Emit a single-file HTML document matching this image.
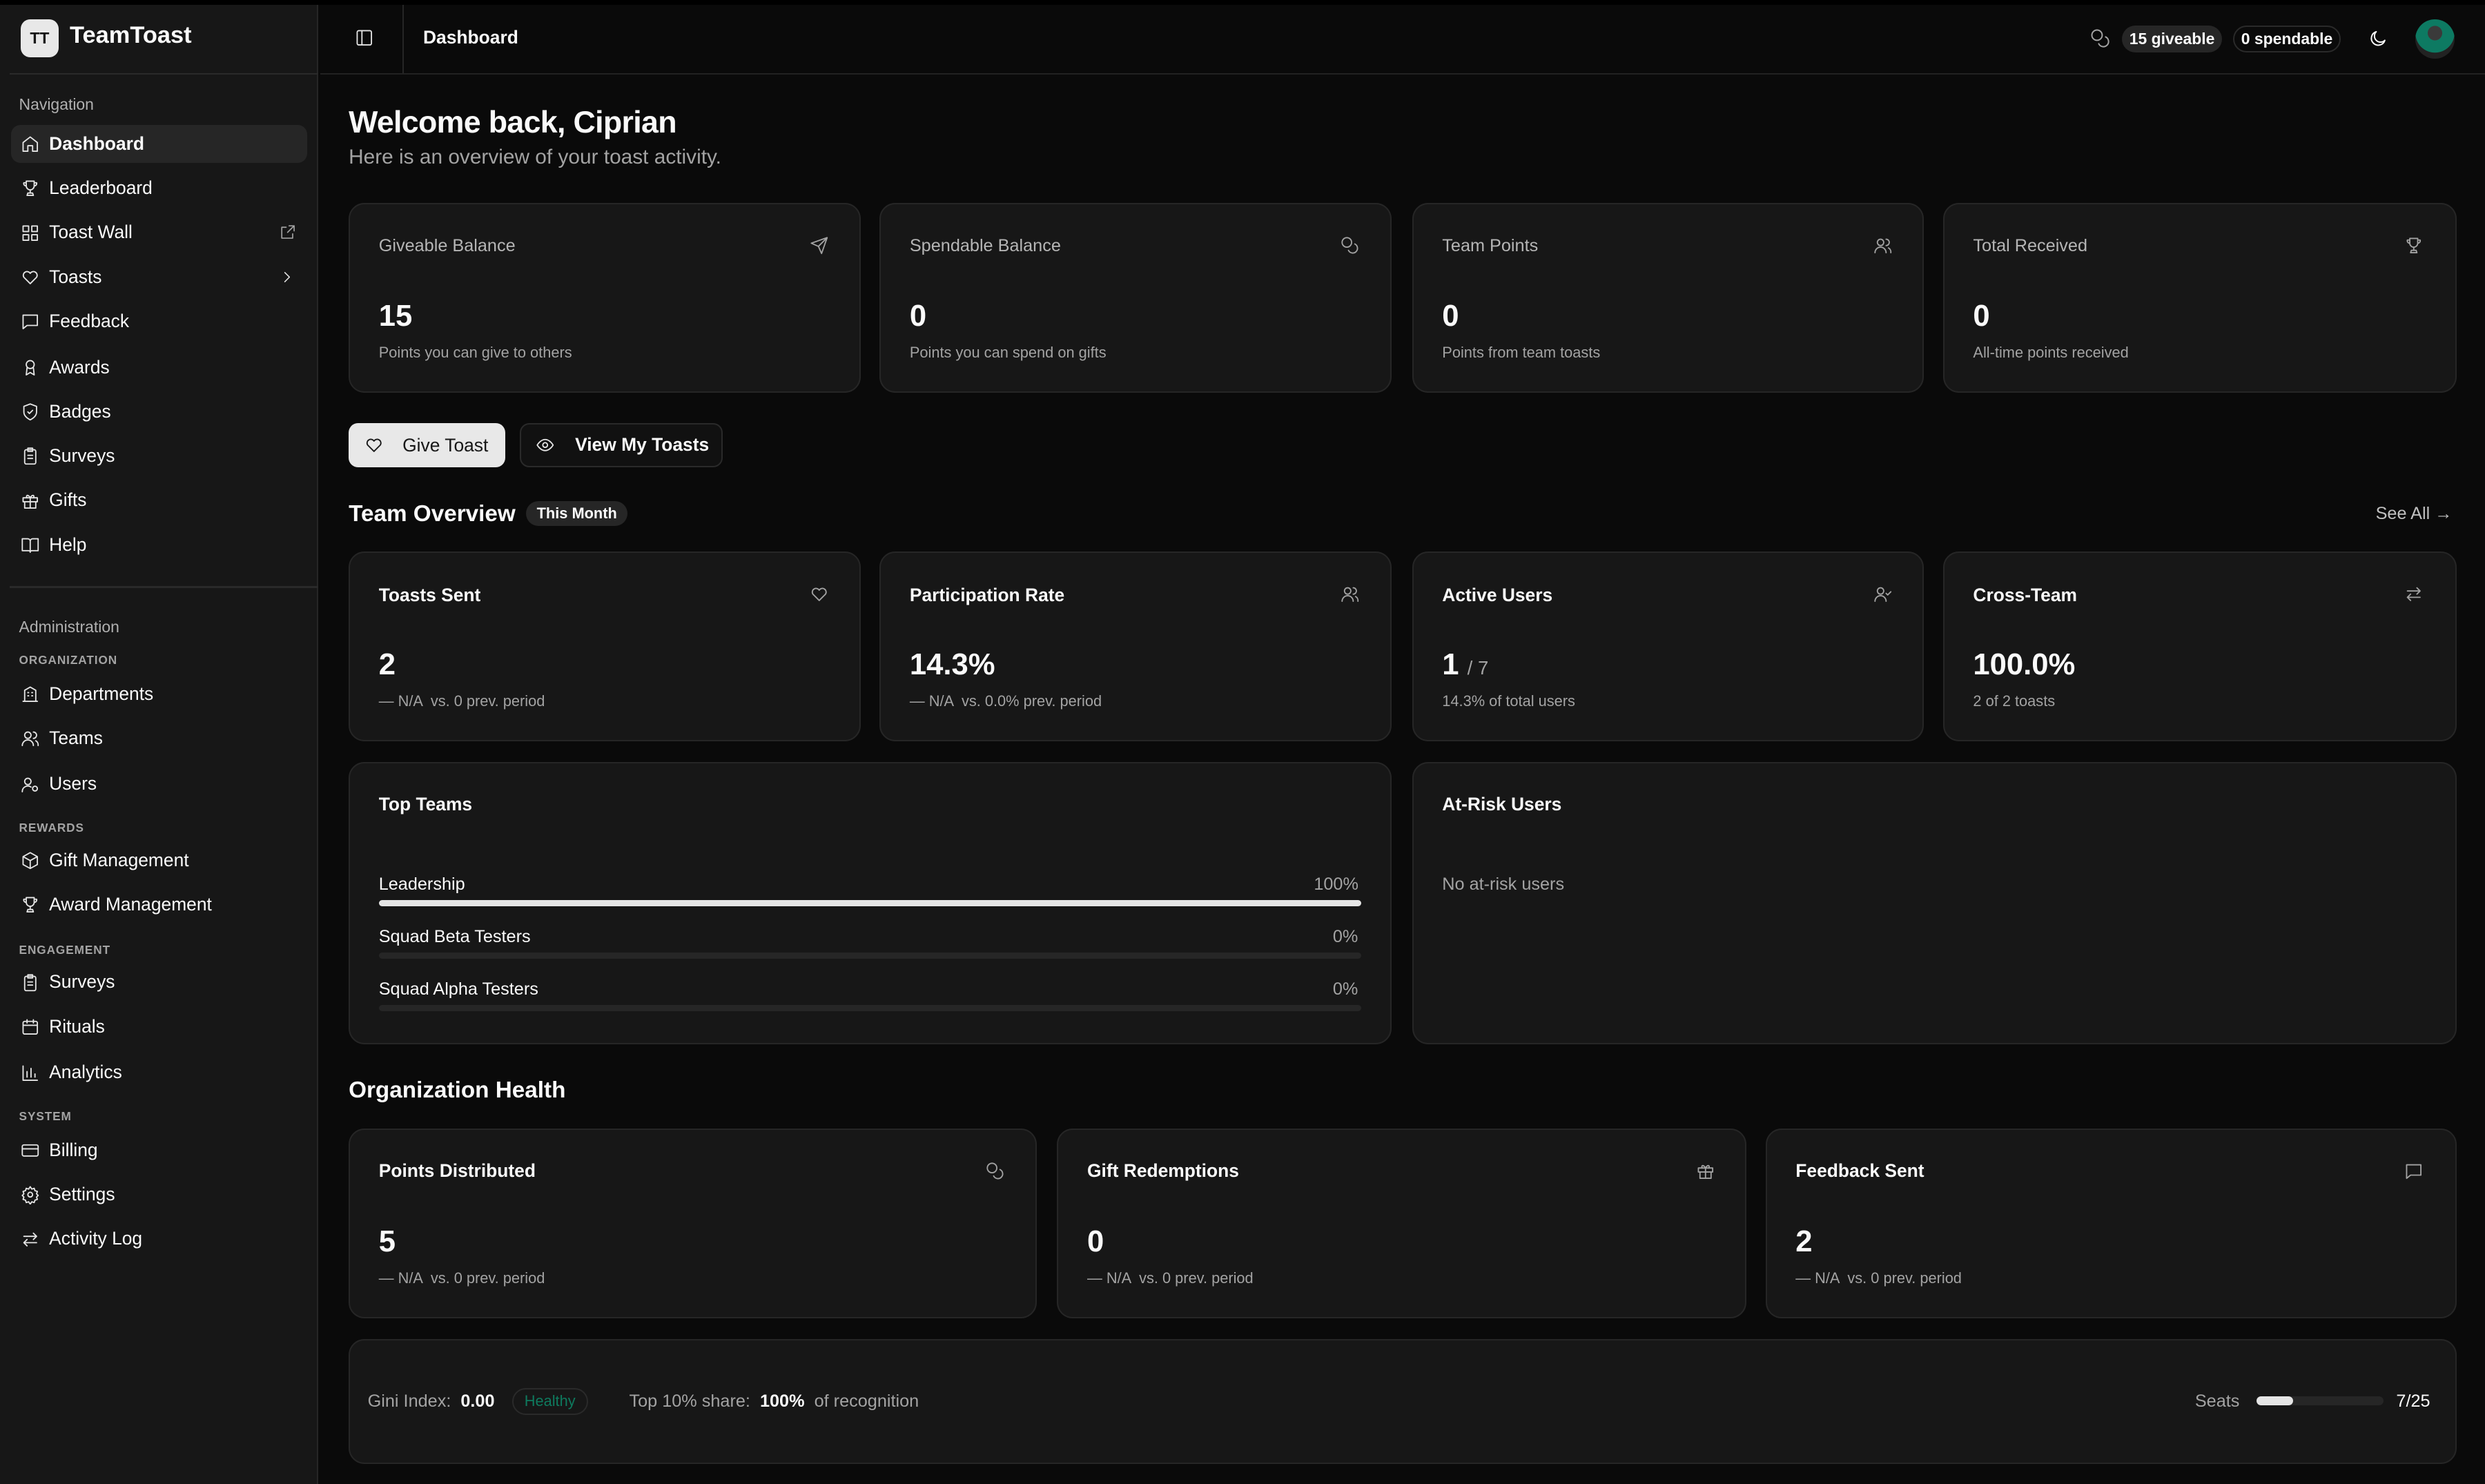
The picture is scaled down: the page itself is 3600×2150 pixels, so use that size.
<!DOCTYPE html>
<html><head><meta charset="utf-8"><style>
*{margin:0;padding:0;box-sizing:border-box}
html,body{width:3600px;height:2150px;background:#0a0a0a;overflow:hidden}
#z{zoom:2.29592;width:1568px;height:937px;position:relative;font-family:"Liberation Sans",sans-serif;color:#fafafa;background:#0a0a0a}
.a{position:absolute;white-space:nowrap}
.c{position:absolute;background:#171717;border:1px solid #262626;border-radius:10px}
svg{position:absolute;fill:none;stroke:currentColor;stroke-width:1.6;stroke-linecap:round;stroke-linejoin:round}
.nav{font-size:11.5px;color:#fafafa}
.sec{font-size:7.5px;font-weight:bold;color:#a3a3a3;letter-spacing:.4px}
.lbl{font-size:11px;color:#b5b5b5}
.big{font-size:19px;font-weight:bold}
.sub{font-size:9.5px;color:#a3a3a3}
.ttl{font-size:11.5px;font-weight:bold}
</style></head><body><div id="z">
<div class="a" style="left:0;top:0;width:1568px;height:3px;background:#000"></div>
<!-- sidebar -->
<div class="a" style="left:0;top:3px;width:201px;height:934px;background:#171717;border-right:1px solid #262626"></div>
<div class="a" style="left:13px;top:12px;width:24px;height:24px;background:#e8e8e8;border-radius:6px;color:#171717;font-size:10px;font-weight:bold;text-align:center;line-height:24px">TT</div>
<div class="a" style="left:44px;top:14px;font-size:15px;font-weight:bold">TeamToast</div>
<div class="a" style="left:6px;top:46px;width:195px;height:1px;background:#2a2a2a"></div>
<div class="a" style="left:12px;top:60px;font-size:10px;color:#b0b0b0">Navigation</div>
<div class="a" style="left:7px;top:79px;width:187px;height:24px;background:#262626;border-radius:6px"></div>
<div style="color:#e5e5e5">
<svg style="left:13px;top:85px" width="12" height="12" viewBox="0 0 24 24"><path d="M3 10l9-7 9 7v11H15v-7H9v7H3z"/></svg>
<svg style="left:13px;top:113px" width="12" height="12" viewBox="0 0 24 24"><path d="M7 3h10v6a5 5 0 01-10 0zM7 5H4a3 3 0 003 4M17 5h3a3 3 0 01-3 4M12 14v4M8 21h8l-1-3H9z"/></svg>
<svg style="left:13px;top:141px" width="12" height="12" viewBox="0 0 24 24"><rect x="3" y="3" width="7" height="7"/><rect x="14" y="3" width="7" height="7"/><rect x="3" y="14" width="7" height="7"/><rect x="14" y="14" width="7" height="7"/></svg>
<svg style="left:13px;top:169px" width="12" height="12" viewBox="0 0 24 24"><path d="M12 20l-8-8a4.5 4.5 0 018-5 4.5 4.5 0 018 5z"/></svg>
<svg style="left:13px;top:197px" width="12" height="12" viewBox="0 0 24 24"><path d="M3 4h18v13H8l-5 4z"/></svg>
<svg style="left:13px;top:226px" width="12" height="12" viewBox="0 0 24 24"><circle cx="12" cy="8" r="5"/><path d="M8 12l-1 9 5-3 5 3-1-9"/></svg>
<svg style="left:13px;top:254px" width="12" height="12" viewBox="0 0 24 24"><path d="M12 2l8 3v7c0 5-4 8-8 10-4-2-8-5-8-10V5z"/><path d="M9 12l2 2 4-4"/></svg>
<svg style="left:13px;top:282px" width="12" height="12" viewBox="0 0 24 24"><rect x="5" y="4" width="14" height="18" rx="2"/><path d="M9 2h6v4H9zM9 11h6M9 15h6"/></svg>
<svg style="left:13px;top:310px" width="12" height="12" viewBox="0 0 24 24"><rect x="3" y="8" width="18" height="5"/><path d="M5 13v8h14v-8M12 8v13M12 8C9 3 6 5 8 8M12 8c3-5 6-3 4 0"/></svg>
<svg style="left:13px;top:338px" width="12" height="12" viewBox="0 0 24 24"><path d="M2 4h7a3 3 0 013 3v14a2 2 0 00-2-2H2zM22 4h-7a3 3 0 00-3 3v14a2 2 0 012-2h8z"/></svg>
<svg style="left:176px;top:141px;color:#a3a3a3" width="11" height="11" viewBox="0 0 24 24"><path d="M14 3h7v7M21 3l-9 9M19 14v6H4V5h6"/></svg>
<svg style="left:176px;top:170px" width="10" height="10" viewBox="0 0 24 24"><path d="M9 5l7 7-7 7"/></svg>
</div>
<div class="a nav" style="left:31px;top:84px;font-weight:bold">Dashboard</div>
<div class="a nav" style="left:31px;top:112px">Leaderboard</div>
<div class="a nav" style="left:31px;top:140px">Toast Wall</div>
<div class="a nav" style="left:31px;top:168px">Toasts</div>
<div class="a nav" style="left:31px;top:196px">Feedback</div>
<div class="a nav" style="left:31px;top:225px">Awards</div>
<div class="a nav" style="left:31px;top:253px">Badges</div>
<div class="a nav" style="left:31px;top:281px">Surveys</div>
<div class="a nav" style="left:31px;top:309px">Gifts</div>
<div class="a nav" style="left:31px;top:337px">Help</div>
<div class="a" style="left:6px;top:370px;width:195px;height:1px;background:#2a2a2a"></div>
<div class="a" style="left:12px;top:390px;font-size:10px;color:#b0b0b0">Administration</div>
<div class="a sec" style="left:12px;top:412px">ORGANIZATION</div>
<div class="a sec" style="left:12px;top:518px">REWARDS</div>
<div class="a sec" style="left:12px;top:595px">ENGAGEMENT</div>
<div class="a sec" style="left:12px;top:700px">SYSTEM</div>
<div style="color:#e5e5e5">
<svg style="left:13px;top:432px" width="12" height="12" viewBox="0 0 24 24"><path d="M3 21h18M5 21V7l7-4 7 4v14M9 10h1M14 10h1M9 14h1M14 14h1"/></svg>
<svg style="left:13px;top:460px" width="12" height="12" viewBox="0 0 24 24"><circle cx="9" cy="8" r="4"/><path d="M2 21a7 7 0 0114 0M16 4a4 4 0 010 8M19 15a6 6 0 013 6"/></svg>
<svg style="left:13px;top:489px" width="12" height="12" viewBox="0 0 24 24"><circle cx="9" cy="8" r="4"/><path d="M2 21a7 7 0 0111-6"/><circle cx="18" cy="17" r="3"/></svg>
<svg style="left:13px;top:537px" width="12" height="12" viewBox="0 0 24 24"><path d="M12 2l9 5v10l-9 5-9-5V7zM3 7l9 5 9-5M12 12v10"/></svg>
<svg style="left:13px;top:565px" width="12" height="12" viewBox="0 0 24 24"><path d="M7 3h10v6a5 5 0 01-10 0zM7 5H4a3 3 0 003 4M17 5h3a3 3 0 01-3 4M12 14v4M8 21h8l-1-3H9z"/></svg>
<svg style="left:13px;top:614px" width="12" height="12" viewBox="0 0 24 24"><rect x="5" y="4" width="14" height="18" rx="2"/><path d="M9 2h6v4H9zM9 11h6M9 15h6"/></svg>
<svg style="left:13px;top:642px" width="12" height="12" viewBox="0 0 24 24"><rect x="3" y="5" width="18" height="16" rx="2"/><path d="M3 10h18M8 3v4M16 3v4"/></svg>
<svg style="left:13px;top:671px" width="12" height="12" viewBox="0 0 24 24"><path d="M3 3v18h18M8 17V10M13 17V6M18 17v-4"/></svg>
<svg style="left:13px;top:720px" width="12" height="12" viewBox="0 0 24 24"><rect x="2" y="5" width="20" height="14" rx="2"/><path d="M2 10h20"/></svg>
<svg style="left:13px;top:748px" width="12" height="12" viewBox="0 0 24 24"><circle cx="12" cy="12" r="3"/><path d="M12 2l2 3 3-1 1 3 3 1-1 3 2 2-2 2 1 3-3 1-1 3-3-1-2 3-2-3-3 1-1-3-3-1 1-3-2-2 2-2-1-3 3-1 1-3 3 1z"/></svg>
<svg style="left:13px;top:776px" width="12" height="12" viewBox="0 0 24 24"><path d="M4 8h16M16 4l4 4-4 4M20 16H4M8 12l-4 4 4 4"/></svg>
</div>
<div class="a nav" style="left:31px;top:431px">Departments</div>
<div class="a nav" style="left:31px;top:459px">Teams</div>
<div class="a nav" style="left:31px;top:488px">Users</div>
<div class="a nav" style="left:31px;top:536px">Gift Management</div>
<div class="a nav" style="left:31px;top:564px">Award Management</div>
<div class="a nav" style="left:31px;top:613px">Surveys</div>
<div class="a nav" style="left:31px;top:641px">Rituals</div>
<div class="a nav" style="left:31px;top:670px">Analytics</div>
<div class="a nav" style="left:31px;top:719px">Billing</div>
<div class="a nav" style="left:31px;top:747px">Settings</div>
<div class="a nav" style="left:31px;top:775px">Activity Log</div>
<!-- header -->
<div class="a" style="left:202px;top:46px;width:1366px;height:1px;background:#222"></div>
<div class="a" style="left:254px;top:3px;width:1px;height:43px;background:#262626"></div>
<svg style="left:224px;top:18px;color:#e5e5e5" width="12" height="12" viewBox="0 0 24 24"><rect x="3" y="3" width="18" height="18" rx="2"/><path d="M9 3v18"/></svg>
<div class="a" style="left:267px;top:17px;font-size:11.5px;font-weight:bold">Dashboard</div>
<svg style="left:1319px;top:18px;color:#a3a3a3" width="13" height="13" viewBox="0 0 24 24"><circle cx="8" cy="8" r="6"/><path d="M18 10a6 6 0 11-8 8"/></svg>
<div class="a" style="left:1339px;top:16px;width:63px;height:17px;border-radius:9px;background:#262626;font-size:10px;font-weight:bold;text-align:center;line-height:17px">15 giveable</div>
<div class="a" style="left:1409px;top:16px;width:68px;height:17px;border-radius:9px;border:1px solid #2a2a2a;font-size:10px;font-weight:bold;text-align:center;line-height:15px">0 spendable</div>
<svg style="left:1494px;top:18px;color:#fafafa" width="13" height="13" viewBox="0 0 24 24"><path d="M20 14A8 8 0 1110 4a6 6 0 0010 10z"/></svg>
<div class="a" style="left:1524px;top:12px;width:25px;height:25px;border-radius:50%;background:radial-gradient(circle at 50% 35%,#3a3a3a 0 22%,#0d7a62 23% 60%,#222 61%)"></div>
<!-- welcome -->
<div class="a" style="left:220px;top:66px;font-size:19.5px;font-weight:bold;letter-spacing:-.3px">Welcome back, Ciprian</div>
<div class="a" style="left:220px;top:92px;font-size:13px;color:#a3a3a3">Here is an overview of your toast activity.</div>
<!-- stat cards -->
<div class="c" style="left:220px;top:128px;width:323px;height:120px"></div>
<div class="c" style="left:555px;top:128px;width:323px;height:120px"></div>
<div class="c" style="left:891px;top:128px;width:323px;height:120px"></div>
<div class="c" style="left:1226px;top:128px;width:324px;height:120px"></div>
<div class="a lbl" style="left:239px;top:149px">Giveable Balance</div>
<div class="a lbl" style="left:574px;top:149px">Spendable Balance</div>
<div class="a lbl" style="left:910px;top:149px">Team Points</div>
<div class="a lbl" style="left:1245px;top:149px">Total Received</div>
<div style="color:#a3a3a3">
<svg style="left:511px;top:149px" width="12" height="12" viewBox="0 0 24 24"><path d="M22 2L11 13M22 2l-7 20-4-9-9-4z"/></svg>
<svg style="left:846px;top:149px" width="12" height="12" viewBox="0 0 24 24"><circle cx="8" cy="8" r="6"/><path d="M18 10a6 6 0 11-8 8"/></svg>
<svg style="left:1182px;top:149px" width="12" height="12" viewBox="0 0 24 24"><circle cx="9" cy="8" r="4"/><path d="M2 21a7 7 0 0114 0M16 4a4 4 0 010 8M19 15a6 6 0 013 6"/></svg>
<svg style="left:1517px;top:149px" width="12" height="12" viewBox="0 0 24 24"><path d="M7 3h10v6a5 5 0 01-10 0zM7 5H4a3 3 0 003 4M17 5h3a3 3 0 01-3 4M12 14v4M8 21h8l-1-3H9z"/></svg>
</div>
<div class="a big" style="left:239px;top:189px">15</div>
<div class="a big" style="left:574px;top:189px">0</div>
<div class="a big" style="left:910px;top:189px">0</div>
<div class="a big" style="left:1245px;top:189px">0</div>
<div class="a sub" style="left:239px;top:217px">Points you can give to others</div>
<div class="a sub" style="left:574px;top:217px">Points you can spend on gifts</div>
<div class="a sub" style="left:910px;top:217px">Points from team toasts</div>
<div class="a sub" style="left:1245px;top:217px">All-time points received</div>
<!-- buttons -->
<div class="a" style="left:220px;top:267px;width:99px;height:28px;background:#e8e8e8;border-radius:6px;color:#171717;font-size:11.5px;line-height:28px;padding-left:34px">Give Toast</div>
<svg style="left:230px;top:275px;color:#171717" width="12" height="12" viewBox="0 0 24 24"><path d="M12 20l-8-8a4.5 4.5 0 018-5 4.5 4.5 0 018 5z"/></svg>
<div class="a" style="left:328px;top:267px;width:128px;height:28px;background:#111;border:1px solid #2a2a2a;border-radius:6px;font-size:11.5px;font-weight:bold;line-height:26px;padding-left:34px">View My Toasts</div>
<svg style="left:338px;top:275px;color:#e5e5e5" width="12" height="12" viewBox="0 0 24 24"><path d="M2 12s4-7 10-7 10 7 10 7-4 7-10 7-10-7-10-7z"/><circle cx="12" cy="12" r="3"/></svg>
<!-- team overview -->
<div class="a" style="left:220px;top:316px;font-size:14.5px;font-weight:bold">Team Overview</div>
<div class="a" style="left:332px;top:316px;width:64px;height:16px;border-radius:8px;background:#262626;font-size:9.5px;font-weight:bold;text-align:center;line-height:16px">This Month</div>
<div class="a" style="left:1499px;top:318px;font-size:11px;color:#c0c0c0">See All →</div>
<div class="c" style="left:220px;top:348px;width:323px;height:120px"></div>
<div class="c" style="left:555px;top:348px;width:323px;height:120px"></div>
<div class="c" style="left:891px;top:348px;width:323px;height:120px"></div>
<div class="c" style="left:1226px;top:348px;width:324px;height:120px"></div>
<div class="a ttl" style="left:239px;top:369px">Toasts Sent</div>
<div class="a ttl" style="left:574px;top:369px">Participation Rate</div>
<div class="a ttl" style="left:910px;top:369px">Active Users</div>
<div class="a ttl" style="left:1245px;top:369px">Cross-Team</div>
<div style="color:#a3a3a3">
<svg style="left:511px;top:369px" width="12" height="12" viewBox="0 0 24 24"><path d="M12 20l-8-8a4.5 4.5 0 018-5 4.5 4.5 0 018 5z"/></svg>
<svg style="left:846px;top:369px" width="12" height="12" viewBox="0 0 24 24"><circle cx="9" cy="8" r="4"/><path d="M2 21a7 7 0 0114 0M16 4a4 4 0 010 8M19 15a6 6 0 013 6"/></svg>
<svg style="left:1182px;top:369px" width="12" height="12" viewBox="0 0 24 24"><circle cx="9" cy="8" r="4"/><path d="M2 21a7 7 0 0114 0M16 11l2 2 4-4"/></svg>
<svg style="left:1517px;top:369px" width="12" height="12" viewBox="0 0 24 24"><path d="M4 8h16M16 4l4 4-4 4M20 16H4M8 12l-4 4 4 4"/></svg>
</div>
<div class="a big" style="left:239px;top:409px">2</div>
<div class="a big" style="left:574px;top:409px">14.3%</div>
<div class="a big" style="left:910px;top:409px">1 <span style="font-size:12px;font-weight:normal;color:#a3a3a3">/ 7</span></div>
<div class="a big" style="left:1245px;top:409px">100.0%</div>
<div class="a sub" style="left:239px;top:437px">— N/A &nbsp;vs. 0 prev. period</div>
<div class="a sub" style="left:574px;top:437px">— N/A &nbsp;vs. 0.0% prev. period</div>
<div class="a sub" style="left:910px;top:437px">14.3% of total users</div>
<div class="a sub" style="left:1245px;top:437px">2 of 2 toasts</div>
<!-- top teams -->
<div class="c" style="left:220px;top:481px;width:658px;height:178px"></div>
<div class="c" style="left:891px;top:481px;width:659px;height:178px"></div>
<div class="a ttl" style="left:239px;top:501px">Top Teams</div>
<div class="a ttl" style="left:910px;top:501px">At-Risk Users</div>
<div class="a" style="left:910px;top:552px;font-size:11px;color:#a3a3a3">No at-risk users</div>
<div class="a" style="left:239px;top:552px;font-size:11px">Leadership</div>
<div class="a" style="left:829px;top:552px;font-size:11px;color:#a3a3a3">100%</div>
<div class="a" style="left:239px;top:568px;width:620px;height:4px;border-radius:2px;background:#e5e5e5"></div>
<div class="a" style="left:239px;top:585px;font-size:11px">Squad Beta Testers</div>
<div class="a" style="left:841px;top:585px;font-size:11px;color:#a3a3a3">0%</div>
<div class="a" style="left:239px;top:601px;width:620px;height:4px;border-radius:2px;background:#262626"></div>
<div class="a" style="left:239px;top:618px;font-size:11px">Squad Alpha Testers</div>
<div class="a" style="left:841px;top:618px;font-size:11px;color:#a3a3a3">0%</div>
<div class="a" style="left:239px;top:634px;width:620px;height:4px;border-radius:2px;background:#262626"></div>
<!-- org health -->
<div class="a" style="left:220px;top:680px;font-size:14.5px;font-weight:bold">Organization Health</div>
<div class="c" style="left:220px;top:712px;width:434px;height:120px"></div>
<div class="c" style="left:667px;top:712px;width:435px;height:120px"></div>
<div class="c" style="left:1114px;top:712px;width:436px;height:120px"></div>
<div class="a ttl" style="left:239px;top:732px">Points Distributed</div>
<div class="a ttl" style="left:686px;top:732px">Gift Redemptions</div>
<div class="a ttl" style="left:1133px;top:732px">Feedback Sent</div>
<div style="color:#a3a3a3">
<svg style="left:622px;top:733px" width="12" height="12" viewBox="0 0 24 24"><circle cx="8" cy="8" r="6"/><path d="M18 10a6 6 0 11-8 8"/></svg>
<svg style="left:1070px;top:733px" width="12" height="12" viewBox="0 0 24 24"><rect x="3" y="8" width="18" height="5"/><path d="M5 13v8h14v-8M12 8v13M12 8C9 3 6 5 8 8M12 8c3-5 6-3 4 0"/></svg>
<svg style="left:1517px;top:733px" width="12" height="12" viewBox="0 0 24 24"><path d="M3 4h18v13H8l-5 4z"/></svg>
</div>
<div class="a big" style="left:239px;top:773px">5</div>
<div class="a big" style="left:686px;top:773px">0</div>
<div class="a big" style="left:1133px;top:773px">2</div>
<div class="a sub" style="left:239px;top:801px">— N/A &nbsp;vs. 0 prev. period</div>
<div class="a sub" style="left:686px;top:801px">— N/A &nbsp;vs. 0 prev. period</div>
<div class="a sub" style="left:1133px;top:801px">— N/A &nbsp;vs. 0 prev. period</div>
<!-- bottom -->
<div class="c" style="left:220px;top:845px;width:1330px;height:79px"></div>
<div class="a" style="left:232px;top:878px;font-size:11px;color:#a3a3a3">Gini Index: &nbsp;<b style="color:#fafafa">0.00</b></div>
<div class="a" style="left:323px;top:876px;width:48px;height:17px;border:1px solid #2a2a2a;border-radius:9px;font-size:9.5px;color:#0e7a5e;text-align:center;line-height:15px">Healthy</div>
<div class="a" style="left:397px;top:878px;font-size:11px;color:#a3a3a3">Top 10% share: &nbsp;<b style="color:#fafafa">100%</b>&nbsp; of recognition</div>
<div class="a" style="left:1385px;top:878px;font-size:11px;color:#a3a3a3">Seats</div>
<div class="a" style="left:1424px;top:881px;width:80px;height:6px;border-radius:3px;background:#262626"></div>
<div class="a" style="left:1424px;top:881px;width:23px;height:6px;border-radius:3px;background:#e5e5e5"></div>
<div class="a" style="left:1512px;top:878px;font-size:11px">7/25</div>
</div></body></html>
